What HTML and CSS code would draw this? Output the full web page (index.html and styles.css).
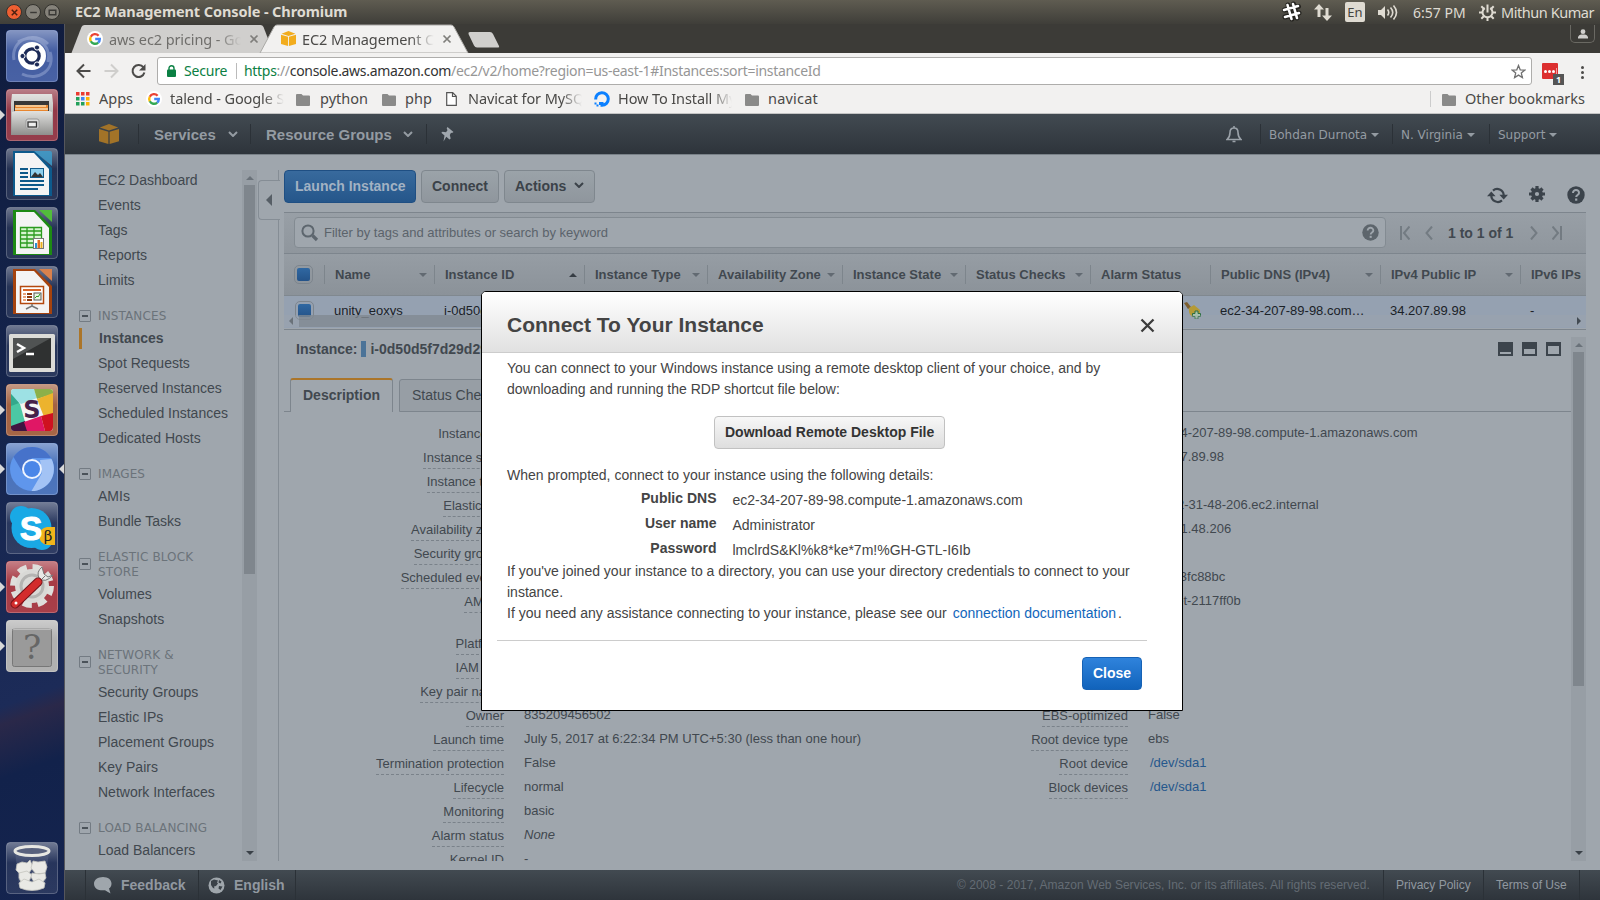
FILE: index.html
```html
<!DOCTYPE html>
<html lang="en">
<head>
<meta charset="utf-8">
<title>EC2 Management Console</title>
<link rel="stylesheet" href="styles.css">
</head>
<body>
<svg class="defs" width="0" height="0" aria-hidden="true">
  <defs>
    <symbol id="google" viewBox="0 0 16 16"><circle cx="8" cy="8" r="8" fill="#fff"/><g fill="none" stroke-width="2.4"><path d="M11.6 4.7A4.8 4.8 0 0 0 3.8 5.7" stroke="#ea4335"/><path d="M3.8 5.7a4.8 4.8 0 0 0 0 4.6" stroke="#fbbc05"/><path d="M3.8 10.3a4.8 4.8 0 0 0 7.4 1.3" stroke="#34a853"/><path d="M11.2 11.6A4.6 4.6 0 0 0 12.8 8H8.2" stroke="#4285f4"/></g></symbol>
    <symbol id="folder" viewBox="0 0 14 13"><path d="M0 2a1 1 0 0 1 1-1h4.5L7 2.5h6a1 1 0 0 1 1 1V12a1 1 0 0 1-1 1H1a1 1 0 0 1-1-1z" fill="#8a8a89"/></symbol>
    <symbol id="box" viewBox="0 0 20 20"><path d="M.8 3.5 10 0l9.200 3.500L10 6.500zM0 5l9.400 2.800V20L0 17.200zM20 5l-9.400 2.800V20L20 17.200z" fill="currentColor"/></symbol>
    <symbol id="x" viewBox="0 0 10 10"><path d="M1.500 1.500l7 7m0-7l-7 7" stroke="currentColor" stroke-width="1.700"/></symbol>
    <symbol id="chev" viewBox="0 0 10 6"><path d="M1 1l4 4 4-4" fill="none" stroke="currentColor" stroke-width="2"/></symbol>
    <symbol id="help" viewBox="0 0 18 18"><circle cx="9" cy="9" r="8.700" fill="currentColor"/><path d="M6 7c0-4.200 6.200-3.700 6 0 0 2-2.800 2-2.800 4" fill="none" stroke="#9fa6ad" stroke-width="2"/><rect x="8.100" y="12.500" width="2.200" height="2.200" fill="#9fa6ad"/></symbol>
    <linearGradient id="gloss" x1="0" y1="0" x2="0" y2="1"><stop offset="0" stop-color="#fff" stop-opacity=".4"/><stop offset=".4" stop-color="#fff" stop-opacity=".08"/><stop offset="1" stop-color="#fff" stop-opacity=".1"/></linearGradient>
    <linearGradient id="metal" x1="0" y1="0" x2="0" y2="1"><stop offset="0" stop-color="#e2e2e0"/><stop offset="1" stop-color="#8f8f8d"/></linearGradient>
    <symbol id="tile" viewBox="0 0 52 52"><rect x=".5" y=".5" width="51" height="51" rx="3.500" fill="url(#gloss)" stroke="#fff" stroke-opacity=".25"/></symbol>
  </defs>
</svg>

<header class="panel">
  <div class="wbtns"><i class="wb close"><svg viewBox="0 0 10 10"><path d="M2.500 2.500l5 5m0-5l-5 5" stroke="#4a2011" stroke-width="1.300"/></svg></i><i class="wb"><svg viewBox="0 0 10 10"><path d="M2 5h6" stroke="#3a3936" stroke-width="1.300"/></svg></i><i class="wb"><svg viewBox="0 0 10 10"><path d="M2 3h6v4H2z" fill="none" stroke="#3a3936" stroke-width="1.300"/></svg></i></div>
  <div class="wtitle">EC2 Management Console - Chromium</div>
  <div class="tray">
    <svg class="t-slack" width="21" height="22" viewBox="0 0 21 22"><path d="M7 4l4 14M12.500 3L16 17M3.500 9l14-3.500M4 16l14-4" stroke="#24231f" stroke-width="5" stroke-linecap="round"/><path d="M6.500 4l4 14M12 3l4 14M3 9l14-4M4 16l14-4" stroke="#fff" stroke-width="2.600" stroke-linecap="round"/></svg>
    <svg class="t-net" width="18" height="17" viewBox="0 0 18 17"><path d="M5 0l5 5.500H6.500V13h-3V5.500H0zM13 17l5-5.500h-3.500V4h-3v7.500H8z" fill="#dfdbd2"/></svg>
    <span class="t-en">En</span>
    <svg class="t-vol" width="20" height="17" viewBox="0 0 20 17"><path d="M0 6h3l4-4v13l-4-4H0z" fill="#dfdbd2"/><path d="M9.500 5.500q2.500 3 0 6M12.500 3.500q4.500 5 0 10M15.500 1.500q6 7 0 14" fill="none" stroke="#dfdbd2" stroke-width="1.600"/></svg>
    <span class="t-clock">6:57 PM</span>
    <svg class="t-gear" width="17" height="17" viewBox="0 0 17 17"><path d="M5.800 4.100A5 5 0 1 0 11.200 4.100" fill="none" stroke="#dfdbd2" stroke-width="2"/><path d="M8.500 13v4M13.500 8.500H17M0 8.500h3.500M2.300 2.300l2.500 2.500M14.700 2.300l-2.500 2.500M2.300 14.700l2.500-2.500M14.700 14.700l-2.500-2.500M8.500 .5v8" stroke="#dfdbd2" stroke-width="2"/></svg>
    <span class="t-name">Mithun Kumar</span>
  </div>
</header>

<div class="desk">
<nav class="launcher">
  <div class="app"><svg viewBox="0 0 52 52"><rect width="52" height="52" rx="4" fill="#34509a"/><path d="M8 30C4 10 28 0 42 14M44 22C50 40 32 52 16 44M12 12C28 2 46 14 42 32" fill="none" stroke="#a9b9e0" stroke-width="3" opacity=".4"/><use href="#tile"/><circle cx="26" cy="26" r="14" fill="#fff"/><circle cx="26" cy="26" r="7.200" fill="none" stroke="#1c2a57" stroke-width="3.200"/><g fill="#1c2a57" stroke="#fff"><circle cx="16.500" cy="26" r="2.600"/><circle cx="31" cy="17.500" r="2.600"/><circle cx="31" cy="34.500" r="2.600"/></g></svg></div>
  <div class="app run"><svg viewBox="0 0 52 52"><rect width="52" height="52" rx="4" fill="#8a2838"/><use href="#tile"/><path d="M6 5h40l1 9v32H5V14z" fill="url(#metal)"/><path d="M8 12h35v12H8z" fill="#373737"/><path d="M9 16h33v8H9z" fill="#e8862f"/><path d="M10 17h30M9 20h33" stroke="#f9dcae" stroke-width="1.500"/><path d="M6 23l3-1h34l3 1v23H6z" fill="url(#metal)"/><rect x="20" y="30" width="13" height="10" rx="2" fill="#ddd" stroke="#999"/><rect x="22" y="33" width="8.500" height="5" fill="#eee" stroke="#333" stroke-width="1.300"/></svg></div>
  <div class="app"><svg viewBox="0 0 52 52"><use href="#tile"/><path d="M7 3h22l17 17v28H7z" fill="#0d5a8c"/><path d="M9 5h19l15 16v26H9z" fill="#f4f4f4"/><path d="M28 3h16q2 0 2 2v13z" fill="#3d9ccb" opacity=".85"/><path d="M14 21h8M14 25h8M14 29h8M14 33h24M14 37h24M14 41h18" stroke="#0e5a8a" stroke-width="2"/><rect x="24.500" y="20.500" width="13" height="9" fill="#8ed0ee" stroke="#0e5a8a"/><path d="M25 29l4-5 3 3 2-2 3 4z" fill="#333"/></svg></div>
  <div class="app"><svg viewBox="0 0 52 52"><use href="#tile"/><path d="M7 3h22l17 17v28H7z" fill="#1d8a14"/><path d="M10 5h18l15 16v26H10z" fill="#f4f4f4"/><path d="M33 3h13v12z" fill="#52bd3b"/><path d="M14 21h22v20H14z" fill="#d7f5d0"/><path d="M14.500 20.500h21v20h-21zM14 24h22M14 28h22M14 32h22M14 36h22M21 20v21M28 20v21" fill="none" stroke="#2b9b1f" stroke-width="1.300"/><rect x="27.500" y="31.500" width="10" height="10" fill="#fff" stroke="#777"/><path d="M29 36h2v5h-2z" fill="#2b8fd0"/><path d="M31.500 33h2.500v8h-2.500z" fill="#e26b1f"/><path d="M34.500 35h2v6h-2z" fill="#eab020"/></svg></div>
  <div class="app"><svg viewBox="0 0 52 52"><use href="#tile"/><path d="M7 3h22l17 17v28H7z" fill="#a5430e"/><path d="M10 5h18l15 16v26H10z" fill="#f4f4f4"/><path d="M33 3h13v12z" fill="#d9814d"/><rect x="14.500" y="20.500" width="23" height="17" fill="#fff" stroke="#b4480e" stroke-width="1.500"/><path d="M17 24h18" stroke="#d8662a" stroke-width="2"/><path d="M17 28h3M17 31h3M17 34h3" stroke="#e9a27a" stroke-width="2"/><path d="M21 28h5M21 31h5M21 34h5" stroke="#8e3a0d" stroke-width="2"/><rect x="28" y="27" width="7" height="7" fill="#e9f5e3" stroke="#555"/><path d="M29 32l2-2 1 1 2-3" stroke="#2b9b1f" fill="none"/><path d="M26 38v2l-6 3M26 40l6 3" stroke="#777" stroke-width="1.500" fill="none"/></svg></div>
  <div class="app"><svg viewBox="0 0 52 52"><use href="#tile"/><rect x="3" y="9" width="46" height="38" rx="1.500" fill="#dcdcd8"/><rect x="7" y="13" width="38" height="30" fill="#2f3131"/><path d="M7 13h38L7 34z" fill="#505353"/><path d="M11 19l7 4-7 4M20 29h8" stroke="#fff" stroke-width="2.400" fill="none"/></svg></div>
  <div class="app run"><svg viewBox="0 0 52 52"><rect width="52" height="52" rx="4" fill="#9c5532"/><use href="#tile"/><rect x="5" y="5" width="42" height="42" rx="3" fill="#f4f4f4"/><path d="M8 5h20l3 9-16 6L5 12V8q0-3 3-3z" fill="#9de1e4"/><path d="M28 5h16q3 0 3 3v2l-16 5z" fill="#8cb04a"/><path d="M31 15l16-6v21l-9 3z" fill="#ecb32e"/><path d="M5 10l9 10 5 18-14 5z" fill="#4bc8a4"/><path d="M5 10l8 9-8 3z" fill="#33a88c"/><path d="M5 42l14-5 3 10H8q-3 0-3-3z" fill="#411442"/><path d="M18 38l17-6 4 15H21z" fill="#e01765"/><path d="M35 32l12-3v14q0 4-3 4h-5z" fill="#cf1120"/></svg><b class="glyph s">S</b></div>
  <div class="app run cur"><svg viewBox="0 0 52 52"><rect width="52" height="52" rx="4" fill="#3a66b4"/><use href="#tile"/><circle cx="26" cy="26" r="22" fill="#5f96ec"/><path d="M7.500 14A22 22 0 0 1 45 15H26L17 30z" fill="#4672ca"/><path d="M45.500 16a22 22 0 0 1-20 32L36 30 34 17z" fill="#a3c3f5"/><circle cx="26" cy="26" r="10" fill="#eef4ff"/><circle cx="26" cy="26" r="8" fill="#4a86e8"/></svg></div>
  <div class="app"><svg viewBox="0 0 52 52"><use href="#tile"/><circle cx="15" cy="15" r="11" fill="#19a9e5"/><circle cx="36" cy="37" r="11" fill="#19a9e5"/><circle cx="25.500" cy="26" r="20" fill="#19a9e5"/><path d="M49 25h-8q-7 1-8 9 1 8 8 9h8z" fill="#f0b51c"/></svg><b class="glyph k">S</b><b class="glyph beta">β</b></div>
  <div class="app run"><svg viewBox="0 0 52 52"><rect width="52" height="52" rx="4" fill="#9f2a35"/><use href="#tile"/><circle cx="26" cy="25" r="17" fill="#d9d9d6"/><circle cx="26" cy="25" r="19" fill="none" stroke="#dededb" stroke-width="6" stroke-dasharray="9 5.920"/><circle cx="26" cy="25" r="11" fill="none" stroke="#b4b4b2" stroke-width="3"/><path d="M33 21l6-6M36 6q-6 5-3 11 6 6 14-3l-5 2-4-3z" fill="#e8e8e6" stroke="#777"/><path d="M9 43L32 21" stroke="#741017" stroke-width="9" stroke-linecap="round"/><path d="M9 43L32 21" stroke="#d32c2c" stroke-width="7" stroke-linecap="round"/><circle cx="10" cy="42" r="1.500" fill="#fff"/></svg></div>
  <div class="app run"><svg viewBox="0 0 52 52"><rect width="52" height="52" rx="4" fill="#a9a9a9"/><use href="#tile"/><rect x="6.500" y="8.500" width="39" height="38" rx="2" fill="#9a9a9a" stroke="#777"/><path d="M7 9h38" stroke="#ddd"/></svg><b class="glyph q">?</b></div>
  <div class="app trash"><svg viewBox="0 0 52 52"><use href="#tile"/><path d="M9 9l4 36q13 6 26 0l4-36z" fill="#6d7794" opacity=".3"/><g fill="#e9e9e5" stroke="#c4c4be" stroke-width=".8"><path d="M11 22l5-2 5 1 3-3 3 7-4 6-9 1-4-4z"/><path d="M27 19l5 1 7-1 2 6-2 6-9 1-5-6z"/><path d="M13 31l8-2 5 4-3 6-8 1-2-4z"/><path d="M26 31l7 1 6-1 1 5-4 5-8-1-3-5z"/><path d="M13 41l5-4 8 3 7-3 6 4-1 5q-12 5-24 0z"/></g><ellipse cx="26" cy="9" rx="17" ry="4.500" fill="#58617d" stroke="#e7e7e2" stroke-width="3"/></svg></div>
</nav>

<main class="window">
  <div class="tabstrip">
    <svg class="tabshape" width="440" height="29" viewBox="0 0 440 29"><path d="M6.500 29L16.500 3q1-2 3-2h176q2 0 3 2l10 26z" fill="#d0cfcd"/><path d="M195 29L209 3q1-2 3-2h174q2 0 3 2l14 26z" fill="#f2f1f0" stroke="#aaa9a6"/><path d="M403.500 10q-.5-2 1.500-2h20q2 0 3 2l6 12q.8 1.500-1 1.500h-21q-2 0-3-2z" fill="#d0cfcd"/></svg>
    <div class="tabs">
      <svg width="16" height="16"><use href="#google"/></svg><span class="tt off">aws ec2 pricing - Goo</span><svg class="tx" width="10" height="10"><use href="#x"/></svg>
      <svg class="fav2" width="15" height="15"><use href="#box"/></svg><span class="tt on">EC2 Management Co</span><svg class="tx" width="10" height="10"><use href="#x"/></svg>
    </div>
    <div class="userbtn"><svg width="10" height="10" viewBox="0 0 10 10"><circle cx="5" cy="2.700" r="2.400" fill="#d0cfcd"/><path d="M0 9.500V8q1-2.500 3-2.500h4q2 0 3 2.500v1.500z" fill="#d0cfcd"/></svg></div>
  </div>

  <div class="toolbar">
    <svg class="tb1" width="15" height="16" viewBox="0 0 15 16"><path d="M14.500 8H2M8 1.500L1.500 8 8 14.500" fill="none" stroke="#4c4b49" stroke-width="2"/></svg>
    <svg class="tb2" width="15" height="16" viewBox="0 0 15 16"><path d="M.5 8H13M7 1.500L13.500 8 7 14.500" fill="none" stroke="#cfcecc" stroke-width="2"/></svg>
    <svg class="tb3" width="15" height="16" viewBox="0 0 15 16"><path d="M12.500 4.500A6 6 0 1 0 13.400 9.500" fill="none" stroke="#4c4b49" stroke-width="2"/><path d="M14.500 1v6.500H8z" fill="#4c4b49"/></svg>
    <div class="omni">
      <svg width="9" height="12" viewBox="0 0 9 12"><rect y="4.500" width="9" height="7.500" rx="1" fill="#0b8043"/><path d="M2 5V3.200a2.500 2.500 0 0 1 5 0V5" fill="none" stroke="#0b8043" stroke-width="1.400"/></svg>
      <span class="secure">Secure</span><i class="osep"></i>
      <span class="url"><em>https</em>://<strong>console.aws.amazon.com</strong>/ec2/v2/home?region=us-east-1#Instances:sort=instanceId</span>
      <svg class="star" width="15" height="15" viewBox="0 0 15 15"><path d="M7.500 1.500l1.700 4.300 4.600.3-3.500 3 1.100 4.500-3.900-2.500-3.900 2.500 1.100-4.500-3.500-3 4.600-.3z" fill="none" stroke="#717171" stroke-width="1.300"/></svg>
    </div>
    <div class="ext"><i></i><i></i><i></i><u></u><b>1</b></div>
    <div class="dots"><i></i><i></i><i></i></div>
  </div>

  <div class="bookmarks">
    <svg width="14" height="14" viewBox="0 0 14 14"><path d="M0 0h3.500v3.500H0zM5 0h3.500v3.500H5zM10 0h3.500v3.500H10z" fill="#ea3b30"/><path d="M0 5h3.500v3.500H0zM0 10h3.500v3.500H0zM5 10h3.500v3.500H5z" fill="#22a05a"/><path d="M5 5h3.500v3.500H5z" fill="#4285f4"/><path d="M10 5h3.500v3.500H10zM10 10h3.500v3.500H10z" fill="#fbb300"/></svg><span class="b1">Apps</span>
    <svg width="16" height="16"><use href="#google"/></svg><span class="fade b2">talend - Google Se</span>
    <svg width="14" height="13"><use href="#folder"/></svg><span class="b3">python</span>
    <svg width="14" height="13"><use href="#folder"/></svg><span class="b4">php</span>
    <svg width="11" height="14" viewBox="0 0 11 14"><path d="M.7.7h6l3.600 3.600v9H.7zM6.500.7v3.800h3.800" fill="#fff" stroke="#555" stroke-width="1.200"/></svg><span class="fade b5">Navicat for MySQL</span>
    <svg width="16" height="16" viewBox="0 0 16 16"><path d="M1.700 8.500A6.300 6.300 0 1 1 8 14.300V11" fill="none" stroke="#0b80ff" stroke-width="3"/><path d="M5 11h3v3H5zM2.500 13.500h2v2h-2zM.5 11.500h2v2h-2z" fill="#0b80ff"/></svg><span class="fade b6">How To Install My</span>
    <svg width="14" height="13"><use href="#folder"/></svg><span class="b7">navicat</span>
    <i class="bsep"></i><svg width="14" height="13"><use href="#folder"/></svg><span class="b8">Other bookmarks</span>
  </div>

  <div class="awsnav">
    <span class="logo"><svg width="20" height="20"><use href="#box"/></svg></span>
    <span class="nv n1"><b>Services</b><svg width="10" height="6"><use href="#chev"/></svg></span>
    <span class="nv n2"><b>Resource Groups</b><svg width="10" height="6"><use href="#chev"/></svg></span>
    <span class="nv n3"><svg width="13" height="15" viewBox="0 0 13 15"><path d="M6.500 0L12.500 5l-1.500 1-1-.3L8.800 8l.9 3.600-1.200.9L5.300 9.800 2.500 14.500 3.500 8.500.3 5.800l1.200-1 3.500.4L6.500 3.300l-.8-2z" fill="#a0a7ae"/></svg></span>
    <span class="nr bell"><svg width="16" height="17" viewBox="0 0 16 17"><path d="M1 13.500q3-2.500 3-7Q4 2 8 2t4 4.500q0 4.500 3 7zM8 0v2M6.500 15.500h3" fill="none" stroke="#9ba2a9" stroke-width="1.600"/></svg></span>
    <span class="nr r1"><span>Bohdan Durnota</span><i class="tri"></i></span>
    <span class="nr r2"><span>N. Virginia</span><i class="tri"></i></span>
    <span class="nr r3"><span>Support</span><i class="tri"></i></span>
  </div>

  <div class="console">
    <aside class="side">
      <ul>
        <li>EC2 Dashboard</li><li>Events</li><li>Tags</li><li>Reports</li><li>Limits</li>
        <li class="h"><i></i><span>INSTANCES</span></li>
        <li class="act">Instances</li><li>Spot Requests</li><li>Reserved Instances</li><li>Scheduled Instances</li><li>Dedicated Hosts</li>
        <li class="h"><i></i><span>IMAGES</span></li>
        <li>AMIs</li><li>Bundle Tasks</li>
        <li class="h"><i></i><span>ELASTIC BLOCK<br>STORE</span></li>
        <li>Volumes</li><li>Snapshots</li>
        <li class="h"><i></i><span>NETWORK &amp;<br>SECURITY</span></li>
        <li>Security Groups</li><li>Elastic IPs</li><li>Placement Groups</li><li>Key Pairs</li><li>Network Interfaces</li>
        <li class="h"><i></i><span>LOAD BALANCING</span></li>
        <li>Load Balancers</li>
      </ul>
      <div class="vscroll"><i class="up"></i><i class="thumb t1"></i><i class="down"></i></div>
    </aside>
    <div class="split"><div class="handle"><i></i></div></div>
    <section class="content">
      <div class="actions">
        <span class="btn blue w1">Launch Instance</span><span class="btn w2">Connect</span><span class="btn w3">Actions<svg width="10" height="6"><use href="#chev"/></svg></span>
        <div class="tools">
          <svg width="21" height="17" viewBox="0 0 21 17"><path d="M6 3.600A6.500 6.500 0 0 1 16.700 8M4.300 8.500A6.500 6.500 0 0 0 15 13.400" fill="none" stroke="currentColor" stroke-width="2.200"/><path d="M0 9.300h8.600L4.300 4.500zM12.400 7.700H21l-4.300 4.800z" fill="currentColor"/></svg>
          <svg width="16" height="16" viewBox="0 0 16 16"><circle cx="8" cy="8" r="4" fill="none" stroke="currentColor" stroke-width="3.800"/><path d="M8 0v4M8 12v4M0 8h4M12 8h4M2.500 2.500L5 5M13.500 2.500L11 5M2.500 13.500L5 11M13.500 13.500L11 11" stroke="currentColor" stroke-width="3.200"/></svg>
          <svg width="18" height="18"><use href="#help"/></svg>
        </div>
      </div>
      <div class="filter">
        <div class="search"><svg width="18" height="18" viewBox="0 0 18 18"><circle cx="7" cy="7" r="5.600" fill="none" stroke="#5d666e" stroke-width="2"/><path d="M11.500 11.500L16 16" stroke="#5d666e" stroke-width="3.200"/></svg><span>Filter by tags and attributes or search by keyword</span><svg class="sh" width="17" height="17"><use href="#help"/></svg></div>
        <svg class="pg p1" width="10" height="14" viewBox="0 0 10 14"><path d="M1 0v14M9.500.5L4 7l5.500 6.500" /></svg>
        <svg class="pg p2" width="8" height="14" viewBox="0 0 8 14"><path d="M7 .5L1.500 7 7 13.500"/></svg>
        <b class="pgt">1 to 1 of 1</b>
        <svg class="pg p3" width="8" height="14" viewBox="0 0 8 14"><path d="M1 .5L6.500 7 1 13.500"/></svg>
        <svg class="pg p4" width="10" height="14" viewBox="0 0 10 14"><path d="M9 0v14M.5.5L6 7 .5 13.500"/></svg>
      </div>
      <div class="trow th">
        <span class="ck"><i></i></span><span>Name<u></u></span><span>Instance ID<u class="asc"></u></span><span>Instance Type<u></u></span><span>Availability Zone<u></u></span><span>Instance State<u></u></span><span>Status Checks<u></u></span><span>Alarm Status</span><span>Public DNS (IPv4)<u></u></span><span>IPv4 Public IP<u></u></span><span>IPv6 IPs</span>
      </div>
      <div class="rowarea">
        <div class="trow td"><span class="ck"><i></i></span><span>unity_eoxys</span><span>i-0d50d5f7d29d2</span><span class="alarm"><svg width="17" height="17" viewBox="0 0 17 17"><path d="M0 1l3-1 4 5-3 2z" fill="#7d5f30"/><path d="M5 6l5-3 6 5v4l-8 3q-4-4-3-9z" fill="#b59a35"/><path d="M11 9h3v2.500h2.500v3H14V17h-3v-2.500H8.500v-3H11z" fill="#a9c3ab" stroke="#2d6f43"/></svg></span><span>ec2-34-207-89-98.com…</span><span>34.207.89.98</span><span>-</span></div>
        <div class="hscroll"><i class="lt"></i><i class="ht"></i><i class="rt"></i></div>
      </div>
      <div class="details">
        <div class="dbody">
          <div class="dhead"><b>Instance:</b><i></i><b>i-0d50d5f7d29d29</b>
            <div class="wins"><i class="w a"></i><i class="w b"></i><i class="w c"></i></div></div>
          <div class="dtabs"><b>Description</b><span>Status Checks</span></div>
          <div class="cols">
            <dl class="left">
              <dt class="nb"><span>Instance ID</span></dt><dd></dd>
              <dt><span>Instance state</span></dt><dd></dd>
              <dt><span>Instance type</span></dt><dd></dd>
              <dt><span>Elastic IPs</span></dt><dd></dd>
              <dt><span>Availability zone</span></dt><dd></dd>
              <dt><span>Security groups</span></dt><dd></dd>
              <dt><span>Scheduled events</span></dt><dd></dd>
              <dt class="tall"><span>AMI ID</span></dt><dd></dd>
              <dt><span>Platform</span></dt><dd></dd>
              <dt><span>IAM role</span></dt><dd></dd>
              <dt><span>Key pair name</span></dt><dd></dd>
              <dt><span>Owner</span></dt><dd>835209456502</dd>
              <dt><span>Launch time</span></dt><dd>July 5, 2017 at 6:22:34 PM UTC+5:30 (less than one hour)</dd>
              <dt><span>Termination protection</span></dt><dd>False</dd>
              <dt><span>Lifecycle</span></dt><dd>normal</dd>
              <dt><span>Monitoring</span></dt><dd>basic</dd>
              <dt><span>Alarm status</span></dt><dd><em>None</em></dd>
              <dt><span>Kernel ID</span></dt><dd>-</dd>
            </dl>
            <dl class="right">
              <dt></dt><dd>ec2-34-207-89-98.compute-1.amazonaws.com</dd>
              <dt></dt><dd>34.207.89.98</dd>
              <dt></dt><dd></dd>
              <dt></dt><dd>ip-172-31-48-206.ec2.internal</dd>
              <dt></dt><dd>172.31.48.206</dd>
              <dt></dt><dd></dd>
              <dt></dt><dd>vpc-b3fc88bc</dd>
              <dt class="tall"></dt><dd>subnet-2117ff0b</dd>
              <dt></dt><dd></dd>
              <dt></dt><dd></dd>
              <dt></dt><dd></dd>
              <dt><span>EBS-optimized</span></dt><dd>False</dd>
              <dt><span>Root device type</span></dt><dd>ebs</dd>
              <dt><span>Root device</span></dt><dd><a>/dev/sda1</a></dd>
              <dt><span>Block devices</span></dt><dd><a>/dev/sda1</a></dd>
            </dl>
          </div>
        </div>
        <div class="vscroll"><i class="up"></i><i class="thumb t2"></i><i class="down"></i></div>
      </div>
    </section>
  </div>

  <footer>
    <span class="f1"><svg width="18" height="17" viewBox="0 0 18 17"><path d="M9 0c5 0 8.500 2.800 8.500 6.500 0 2.500-1 4-2.500 5l1.500 5-5.500-3.300C5 14 0 12 0 6.500 0 2.800 4 0 9 0z" fill="#9fa6ac"/></svg><b>Feedback</b></span>
    <span class="f2"><svg width="17" height="17" viewBox="0 0 17 17"><circle cx="8.500" cy="8.500" r="8" fill="#9fa6ac"/><path d="M3 4l3-1.500 4 1-1 2 1 1-2 2.500-2 .5.500 2-1.500-.5L3 8zM11 3l2.500 1.500-1 2-2-1zM11 9l3.500.5-2 3.500-2-1.500z" fill="#3a4148"/></svg><b>English</b></span>
    <span class="f3">© 2008 - 2017, Amazon Web Services, Inc. or its affiliates. All rights reserved.</span>
    <span class="f4">Privacy Policy</span><span class="f5">Terms of Use</span>
  </footer>
</main>
</div>

<div class="modal" role="dialog">
  <div class="mhead"><h1>Connect To Your Instance</h1><svg width="15" height="15" viewBox="0 0 15 15"><path d="M1.500 1.500l12 12m0-12l-12 12" stroke="#3c3c3c" stroke-width="2.300"/></svg></div>
  <div class="mbody">
    <p>You can connect to your Windows instance using a remote desktop client of your choice, and by<br>downloading and running the RDP shortcut file below:</p>
    <span class="btn dl">Download Remote Desktop File</span>
    <p>When prompted, connect to your instance using the following details:</p>
    <div class="creds"><b>Public DNS</b><span>ec2-34-207-89-98.compute-1.amazonaws.com</span><b>User name</b><span>Administrator</span><b>Password</b><span>lmclrdS&amp;Kl%k8*ke*7m!%GH-GTL-I6Ib</span></div>
    <p>If you've joined your instance to a directory, you can use your directory credentials to connect to your<br>instance.<br>If you need any assistance connecting to your instance, please see our <a>connection documentation</a>.</p>
  </div>
  <div class="mfoot"><span class="btn blue">Close</span></div>
</div>
</body>
</html>
```
FILE: styles.css
```css
* { box-sizing: border-box; }
body { margin: 0; width: 1600px; height: 900px; overflow: hidden; position: relative; background: #9fa6ad; font-family: "Liberation Sans", Arial, sans-serif; color: #41484f; white-space: nowrap; }
svg { display: block; flex: none; }
.defs { position: absolute; }
ul, dl, dd, p, h1 { margin: 0; padding: 0; }
em, i { font-style: normal; }

/* desktop panel */
.panel { height: 24px; display: flex; background: linear-gradient(#5f5c51, #3f3e39); font-family: "Noto Sans", sans-serif; color: #dfdbd2; font-size: 15px; line-height: 23px; }
.wbtns { display: flex; gap: 3px; padding: 4px 0 0 6px; width: 75px; }
.wb { width: 16px; height: 16px; border-radius: 50%; background: #85827a; border: 1px solid #33322e; display: flex; align-items: center; justify-content: center; }
.wb svg { width: 11px; height: 11px; }
.wb.close { background: #ee5f32; }
.wtitle { font-weight: 700; font-size: 14.500px; letter-spacing: -.09px; }
.tray { flex: 1; display: flex; align-items: center; justify-content: flex-end; padding-right: 6px; }
.t-slack { margin-right: 12px; }
.t-net { margin-right: 13px; }
.t-en { width: 20px; height: 20px; background: #dfdbd2; color: #45443f; border-radius: 2px; font-size: 13px; line-height: 20px; text-align: center; margin-right: 13px; }
.t-vol { margin-right: 15px; }
.t-clock { width: 53px; margin-right: 13px; font-size: 14px; }
.t-gear { margin-right: 5px; }
.t-name { width: 93px; font-size: 14.500px; letter-spacing: -.45px; }

.desk { display: flex; height: 876px; }

/* launcher */
.launcher { width: 65px; padding: 6px 0 0 6px; display: flex; flex-direction: column; gap: 7px; background: linear-gradient(160deg, #101c3e, #14244c 40%, #1c2b58 76%, #2a2849 78%, #12224b 84%, #15244f); border-right: 1px solid #55565c; }
.app { width: 52px; height: 52px; position: relative; flex: none; }
.app > svg { width: 52px; height: 52px; }
.run::before { content: ""; position: absolute; left: -6px; top: 21px; border: 5px solid transparent; border-left-color: #d8d8d8; border-right: 0; }
.cur::after { content: ""; position: absolute; right: -6px; top: 21px; border: 5px solid transparent; border-right-color: #d8d8d8; border-left: 0; }
.trash { margin-top: 163px; }
.glyph { position: absolute; left: 0; top: 0; width: 52px; text-align: center; line-height: 52px; color: #fff; }
.glyph.s { color: #45204a; font: 700 24px/52px "DejaVu Sans", sans-serif; }
.glyph.k { font-size: 34px; left: -1px; font-weight: 700; -webkit-text-stroke: 1px #fff; }
.glyph.beta { color: #222; font: 400 15px/20px "DejaVu Serif", serif; left: 16px; top: 24px; }
.glyph.q { color: #666; font: 400 34px/54px "DejaVu Serif", serif; }

/* browser chrome */
.window { flex: 1; display: flex; flex-direction: column; min-width: 0; font-family: "Noto Sans", sans-serif; }
.tabstrip { height: 29px; background: #3c3b37; position: relative; display: flex; justify-content: space-between; }
.tabshape { position: absolute; left: 0; top: 0; }
.tabs { position: relative; display: flex; align-items: center; padding-left: 22px; font-size: 14.500px; }
.tt { width: 132px; overflow: hidden; margin: 0 8px 0 6px; letter-spacing: -.1px; -webkit-mask-image: linear-gradient(90deg, #000 82%, transparent); mask-image: linear-gradient(90deg, #000 82%, transparent); }
.off { color: #6f6e6b; }
.on { color: #4c4b49; }
.tx { color: #7f7e7b; }
.fav2 { margin-left: 22px; color: #f2ac1d; }
.userbtn { width: 25px; height: 18px; margin: 1px 5px 0 0; border: 1px solid #6a6963; border-top: 0; border-radius: 0 0 5px 5px; display: flex; align-items: center; justify-content: center; }
.toolbar { height: 32px; background: #f2f1f0; display: flex; padding: 4px 0 0 11px; position: relative; z-index: 1; }
.toolbar > svg { margin-top: 6px; }
.tb1 { margin-right: 13px; }
.tb2 { margin-right: 12px; }
.tb3 { margin-right: 11px; }
.omni { width: 1375px; height: 28px; border: 1px solid #aeadab; border-radius: 3px; background: #fff; display: flex; align-items: center; padding-left: 9px; font-size: 14px; line-height: 24px; color: #969696; }
.omni .secure { color: #0b8043; width: 43px; margin: 0 9px 0 8px; letter-spacing: -.2px; }
.osep { width: 1px; height: 16px; background: #bbb; margin-right: 7px; }
.url { letter-spacing: -.31px; }
.url em { color: #0b8043; }
.url strong { font-weight: 400; color: #333; }
.star { margin-left: auto; margin-right: 5px; }
.ext { width: 16px; height: 16px; background: #dc2f2f; border-radius: 1px; margin: 6px 0 0 10px; position: relative; display: flex; align-items: center; gap: 1px; padding-left: 2px; }
.ext i { width: 3px; height: 3px; border-radius: 50%; background: #fff; }
.ext u { width: 1px; height: 6px; background: #f1a0a0; }
.ext b { position: absolute; left: 11px; top: 11px; width: 11px; height: 11px; background: #555; color: #fff; font-size: 9px; line-height: 11px; text-align: center; }
.dots { margin: 9px 0 0 23px; display: flex; flex-direction: column; gap: 2px; }
.dots i { width: 3px; height: 3px; border-radius: 50%; background: #4c4b49; }
.bookmarks { height: 29px; background: #f2f1f0; border-bottom: 1px solid #c4c4c4; display: flex; align-items: center; padding-left: 11px; color: #4a4947; font-size: 14.500px; }
.bookmarks span { overflow: hidden; padding-bottom: 2px; }
.bookmarks .fade { -webkit-mask-image: linear-gradient(90deg, #000 82%, transparent); mask-image: linear-gradient(90deg, #000 82%, transparent); letter-spacing: -.1px; }
.b1 { width: 37px; margin: 0 10px 0 9px; }
.b2 { width: 114px; margin: 0 12px 0 8px; }
.b3 { width: 54px; margin: 0 8px 0 10px; }
.b4 { width: 30px; margin: 0 11px 0 9px; }
.b5 { width: 114px; margin: 0 12px 0 11px; }
.b6 { width: 114px; margin: 0 13px 0 8px; }
.b7 { margin-left: 9px; letter-spacing: .2px; }
.bsep { width: 1px; height: 16px; background: #ccc; margin: 0 11px 0 auto; }
.b8 { width: 122px; margin: 0 13px 0 9px; }

/* console navigation */
.awsnav { height: 41px; background: linear-gradient(#424a51, #2e343b); border-bottom: 1px solid #798188; display: flex; align-items: center; color: #949ba2; }
.logo { width: 73px; padding-left: 34px; color: #a27328; }
.nv, .nr { height: 20px; border-left: 1px solid #2b3137; display: flex; align-items: center; }
.nv b { font: 700 15px/20px "Liberation Sans", Arial, sans-serif; margin-top: 1px; }
.nv { padding-left: 15px; }
.n1 { width: 112px; } .n2 { width: 176px; } .n3 { padding-left: 14px; }
.n1 b { width: 74px; } .n2 b { width: 137px; }
.nr { font: 12px/20px "DejaVu Sans", Verdana, sans-serif; padding-left: 8px; }
.nr span, .tri { margin-top: 1px; }
.bell { margin-left: auto; border: 0; width: 34px; padding: 0; }
.r1 { width: 132px; } .r2 { width: 97px; } .r3 { width: 111px; }
.tri { border: 4px solid transparent; border-top-color: currentColor; border-bottom: 0; margin-left: 4px; }

/* console body */
.console { height: 715px; padding: 15px 14px 9px 0; display: flex; font-family: "Liberation Sans", Arial, sans-serif; background: #9fa6ad; }
.side { width: 192px; display: flex; justify-content: space-between; }
.side ul { list-style: none; font-size: 14px; line-height: 25px; margin-top: -2px; padding-left: 14px; height: 693px; overflow: hidden; }
.side li { height: 25px; padding-left: 19px; }
.side .h { height: auto; padding: 15px 0 3px; display: flex; align-items: center; font: 12px/15px "DejaVu Sans", Verdana, sans-serif; letter-spacing: .12px; color: #6b737a; }
.side .h span { padding-top: 1px; margin-bottom: -1px; }
.side .h i { width: 12px; height: 12px; border: 1px solid #737b83; border-radius: 1px; margin-right: 7px; display: flex; align-items: center; justify-content: center; }
.side .h i::before { content: ""; width: 6px; height: 2px; background: #4b535a; }
.side .act { font-weight: 700; padding-left: 17px; position: relative; height: 25px; border-left: 3px solid; border-image: linear-gradient(transparent 3px, #ab7529 3px, #ab7529 22px, transparent 22px) 1; }
.vscroll { width: 15px; background: #979ea5; display: flex; flex-direction: column; align-items: center; height: 691px; }
.up { border: 4px solid transparent; border-bottom-color: #6a727a; border-top: 0; margin: 6px 0 5px; }
.down { border: 4px solid transparent; border-top-color: #3a4148; border-bottom: 0; margin: auto 0 6px; }
.thumb { width: 11px; background: #7f868d; }
.t1 { height: 389px; }
.t2 { height: 334px; }
.split { width: 22px; border-right: 1px solid #858d95; height: 691px; }
.handle { width: 22px; margin: 10px 0 0 1px; height: 40px; background: #9fa6ad; border: 1px solid #858d95; border-right: 0; border-radius: 4px 0 0 4px; display: flex; align-items: center; padding-left: 7px; }
.handle i { border: 6px solid transparent; border-right-color: #565e66; border-left: 0; }
.content { width: 1302px; margin-left: 5px; height: 691px; display: flex; flex-direction: column; }
.actions { display: flex; height: 42px; gap: 5px; }
.btn { height: 33px; border: 1px solid #7f878e; border-radius: 4px; background: linear-gradient(#9ba3a9, #8f969d); font-weight: 700; font-size: 14px; line-height: 31px; padding-left: 10px; display: block; color: #3b4249; }
.btn.blue { background: linear-gradient(#386a9d, #25568a); border-color: #1f4f83; color: #a3b2c3; }
.w1 { width: 132px; } .w2 { width: 78px; } .w3 { width: 91px; display: flex; }
.w3 svg { margin: 11px 0 0 8px; }
.tools { margin-left: auto; display: flex; align-items: flex-start; color: #3b434b; padding: 16px 1px 0 0; gap: 22px; }
.tools svg:first-child { margin: 1px -1px 0 0; }
.filter { height: 41px; border-top: 1px solid #7d858d; background: linear-gradient(#989fa6, #8f969d); display: flex; align-items: center; padding: 0 0 0 10px; }
.search { width: 1092px; height: 31px; border: 1px solid #838b92; border-radius: 4px; background: #9fa6ad; margin-top: -1px; display: flex; align-items: center; padding: 0 6px 0 6px; font-size: 13px; color: #5b636b; }
.search span { margin-left: 5px; margin-top: -1px; }
.sh { margin-left: auto; color: #5d656c; }
.pg path { fill: none; stroke: #737b82; stroke-width: 2; }
.p1 { margin-left: 14px; } .p2 { margin-left: 15px; } .p3 { margin-left: 0; } .p4 { margin-left: 14px; }
.pgt { font-size: 14px; width: 82px; margin-left: 15px; }
.trow { display: grid; grid-template-columns: 40px 110px 150px 123px 135px 123px 125px 120px 170px 140px 66px; font-size: 13px; }
.th { height: 43px; border-top: 1px solid #7d858d; border-bottom: 1px solid #80888f; background: linear-gradient(#969da4, #8b9299); align-items: center; font-weight: 700; }
.th span + span { height: 19px; line-height: 18px; border-left: 1px solid #7d858c; padding-left: 10px; display: flex; justify-content: space-between; align-items: center; }
.th u { border: 4px solid transparent; border-top-color: #626a72; border-bottom: 0; margin-right: 7px; }
.th .asc { border: 4px solid transparent; border-bottom-color: #363d44; border-top: 0; }
.ck { padding-left: 10px; }
.ck i { display: block; width: 19px; height: 19px; border: 1px solid #7d858d; border-radius: 5px; padding: 2px; }
.ck i::before { content: ""; display: block; height: 13px; border-radius: 2px; background: linear-gradient(#3068a2, #245389); }
.rowarea { height: 34px; position: relative; overflow: hidden; border-bottom: 1px solid #7d858d; margin-bottom: 7px; }
.td { background: #95a1b1; height: 32px; grid-template-columns: 40px 110px 750px 26px 170px 140px auto; color: #1b2127; line-height: 29px; }
.td .ck { padding: 5px 0 0 11px; }
.td span:nth-child(n+2) { padding-left: 10px; }
.td span.alarm { padding: 6px 0 0 0; }
.hscroll { position: absolute; left: 0; right: 0; top: 19px; height: 12px; display: flex; align-items: center; background: rgba(159,166,173,.3); }
.ht { width: 740px; height: 12px; background: rgba(126,134,142,.7); margin-left: 6px; }
.lt { border: 4px solid transparent; border-right-color: #6a727a; border-left: 0; margin-left: 5px; }
.rt { border: 4px solid transparent; border-left-color: #424a52; border-right: 0; margin: 0 5px 0 auto; }

/* detail pane */
.details { height: 524px; display: flex; overflow: hidden; }
.details .vscroll { height: 524px; }
.dbody { width: 1287px; }
.dhead { height: 41px; display: flex; padding: 4px 0 0 12px; font-size: 14px; line-height: 17px; }
.dhead > i { width: 5px; height: 16px; background: #4b7398; margin: 0 4px 0 4px; }
.wins { margin: 1px 10px 0 auto; display: flex; gap: 9px; }
.w { width: 15px; height: 14px; border: 2px solid #3c444c; border-top-width: 4px; }
.a { border-top-width: 10px; } .b { border-top-width: 7px; }
.dtabs { display: flex; height: 34px; font-size: 14px; line-height: 30px; }
.dtabs::before { content: ""; width: 6px; border-bottom: 1px solid #7d858d; }
.dtabs::after { content: ""; flex: 1; border-bottom: 1px solid #7d858d; }
.dtabs b { width: 103px; border: 1px solid #7d858d; border-bottom: 0; border-top: 2px solid #ab7529; border-radius: 3px 3px 0 0; padding-left: 12px; }
.dtabs span { width: 120px; border: 1px solid #7d858d; border-radius: 3px 3px 0 0; background: #979ea5; padding-left: 12px; margin: 1px 0 0 0; }
.dtabs b + span { box-shadow: -6px 33px 0 -32px #7d858d; margin-left: 6px; }
.cols { height: 449px; overflow: hidden; display: grid; grid-template-columns: 624px auto; font-size: 13px; }
dl { display: grid; grid-template-columns: 220px auto; grid-auto-rows: max-content; column-gap: 20px; padding-top: 9px; line-height: 24px; }
dt { height: 24px; text-align: right; }
dt span { display: inline-block; line-height: 19px; height: 21px; margin-top: 3px; border-bottom: 1px dashed #7a828a; }
.nb span { border: 0; }
.tall { height: 42px; }
dd { height: 24px; }
dd em { font-style: italic; }
dd a { color: #25578c; padding-left: 2px; }

footer { height: 30px; background: linear-gradient(#424a51, #2e343b); display: flex; align-items: center; font: 12px/30px "Liberation Sans", Arial, sans-serif; color: #9198a0; padding-left: 20px; }
footer span { border-left: 1px solid #2b3137; height: 30px; display: flex; align-items: center; }
footer b { font-size: 14px; }
.f1 { width: 113px; padding-left: 8px; gap: 9px; } .f2 { width: 98px; padding-left: 9px; gap: 9px; border-right: 1px solid #2b3137; }
footer .f3 { border: 0; margin-left: auto; width: 426px; color: #646c74; letter-spacing: .02px; }
.f4 { width: 100px; padding-left: 12px; } .f5 { width: 97px; padding-left: 12px; border-right: 1px solid #2b3137; margin-right: 20px; }

/* connect dialog */
.modal { position: absolute; left: 481px; top: 291px; width: 702px; height: 420px; background: #fff; border: 1px solid #000; border-radius: 5px 5px 0 0; color: #444; font-size: 14px; line-height: 21px; z-index: 2; }
.mhead { height: 61px; border-bottom: 1px solid #ccc; border-radius: 4px 4px 0 0; background: linear-gradient(#fff, #e1e1e1); display: flex; align-items: center; justify-content: space-between; padding: 6px 27px 0 25px; }
h1 { font-size: 21px; color: #444; margin-top: -2px; }
.mbody { padding: 5px 0 0 25px; height: 287px; width: 665px; }
.modal .btn { background: linear-gradient(#f7f7f7, #dedede); border-color: #c1c1c1; color: #333; }
.modal .dl { width: 231px; margin: 16px 0 16px 207px; }
.modal .blue { background: linear-gradient(#2f83dc, #1163bb); border-color: #1662b5; color: #fff; width: 60px; }
.creds { display: grid; grid-template-columns: 209.500px auto; grid-auto-rows: 25px; column-gap: 16px; margin: 2px 0 -2px; }
.creds b { text-align: right; line-height: 21px; }
.creds span { line-height: 25px; }
.modal a { color: #1166bb; padding: 0 2px; }
.mfoot { margin: 0 35px 0 15px; border-top: 1px solid #ccc; padding: 16px 5px 0 0; display: flex; justify-content: flex-end; }
```
